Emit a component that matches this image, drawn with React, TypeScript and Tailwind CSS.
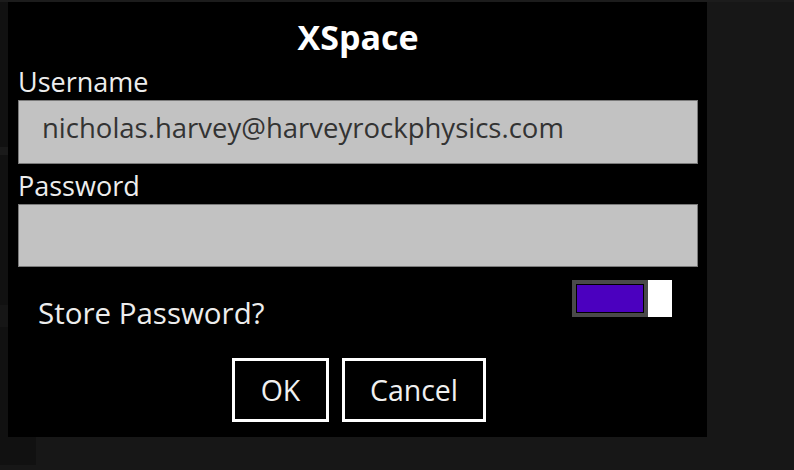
import React, { useState } from "react";

const font = { fontFamily: '"Open Sans", "Noto Sans", sans-serif' };

const Field = ({ label, value, last }: { label: string; value: string; last?: boolean }) => (
  <div className={last ? "mt-[8px]" : "mt-[14px]"}>
    <p className="text-[27px] leading-[27px] text-[#ededed]">{label}</p>
    <div
      className={`mt-[5px] ${last ? "h-[63px]" : "h-[64px]"} border border-[#7a7a7a] bg-[#c2c2c2] pl-[23px] pt-[14px] text-[27.5px] leading-[26px] text-[#333333]`}
    >
      {value}
    </div>
  </div>
);

const Toggle = ({ on, onChange }: { on: boolean; onChange: () => void }) => (
  <button onClick={onChange} className="mt-[13px] mr-[26px] flex h-[37px] w-[100px]">
    <div className="flex-1 border-[4px] border-[#4a4a4a] bg-black p-[1px]">
      <div className={`h-full w-full ${on ? "bg-[#4b00bf]" : "bg-black"}`} />
    </div>
    <div className="h-full w-[24px] bg-white" />
  </button>
);

export default function App() {
  const [store, setStore] = useState(true);

  return (
    <div className="flex h-[470px] w-[794px] flex-col bg-[#171717]" style={font}>
      <div className="h-[2px] bg-[#1c1c1c]" />
      <div className="flex">
        <div className="flex w-[8px] flex-col bg-[#111111]">
          <div className="h-[145px]" />
          <div className="h-[8px] bg-[#1a1a1a]" />
          <div className="h-[150px]" />
          <div className="h-[22px] bg-[#161616]" />
        </div>
        <div className="flex h-[435px] w-[699px] flex-col bg-black pl-[10px] pr-[9px]">
          <h1 className="pt-[18px] text-center text-[34px] leading-[34px] font-bold text-white">XSpace</h1>
          <Field label="Username" value="nicholas.harvey@harveyrockphysics.com" />
          <Field label="Password" value="" last />
          <div className="flex h-[59px] items-start justify-between">
            <p className="mt-[32px] ml-[20px] text-[29.5px] leading-[27px] text-[#ededed]">Store Password?</p>
            <Toggle on={store} onChange={() => setStore(!store)} />
          </div>
          <div className="mt-[32px] flex justify-center gap-[13px] pl-[2px]">
            <button className="h-[64px] w-[97px] border-[3px] border-white text-[28.5px] leading-[28px] text-[#f0f0f0]">OK</button>
            <button className="h-[64px] w-[144px] border-[3px] border-white text-[28.5px] leading-[28px] text-[#f0f0f0]">Cancel</button>
          </div>
        </div>
      </div>
      <div className="h-[28px] w-[36px] bg-[#111111]" />
    </div>
  );
}
